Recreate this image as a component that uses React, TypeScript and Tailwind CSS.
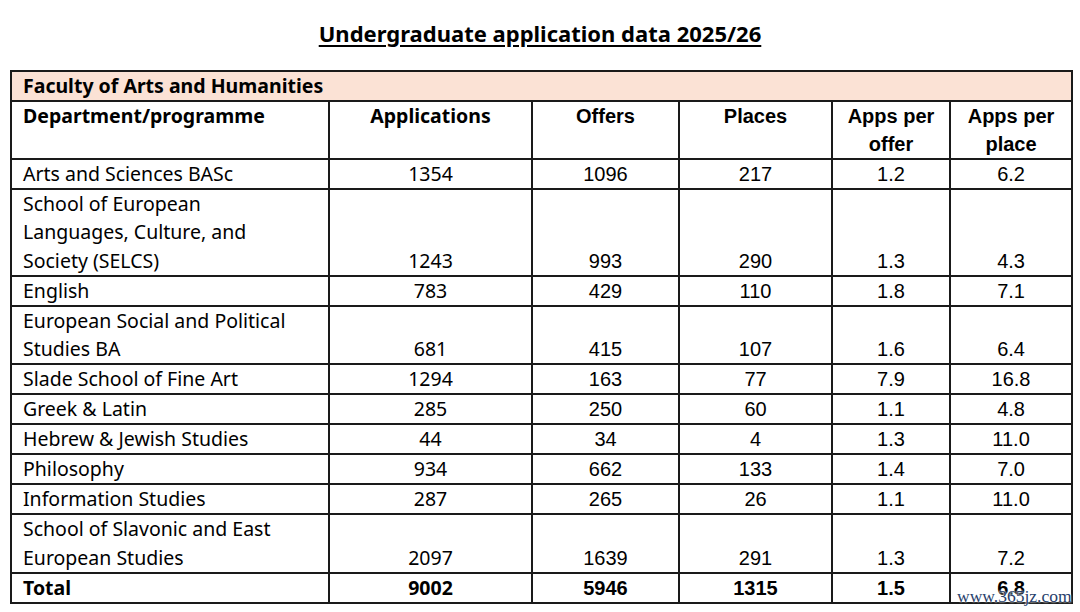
import React from "react";

type Row = { name: string[]; v: string[]; bold?: boolean };

const rows: Row[] = [
  { name: ["Arts and Sciences BASc"], v: ["1354", "1096", "217", "1.2", "6.2"] },
  {
    name: ["School of European", "Languages, Culture, and", "Society (SELCS)"],
    v: ["1243", "993", "290", "1.3", "4.3"],
  },
  { name: ["English"], v: ["783", "429", "110", "1.8", "7.1"] },
  {
    name: ["European Social and Political", "Studies BA"],
    v: ["681", "415", "107", "1.6", "6.4"],
  },
  { name: ["Slade School of Fine Art"], v: ["1294", "163", "77", "7.9", "16.8"] },
  { name: ["Greek & Latin"], v: ["285", "250", "60", "1.1", "4.8"] },
  { name: ["Hebrew & Jewish Studies"], v: ["44", "34", "4", "1.3", "11.0"] },
  { name: ["Philosophy"], v: ["934", "662", "133", "1.4", "7.0"] },
  { name: ["Information Studies"], v: ["287", "265", "26", "1.1", "11.0"] },
  {
    name: ["School of Slavonic and East", "European Studies"],
    v: ["2097", "1639", "291", "1.3", "7.2"],
  },
  { name: ["Total"], v: ["9002", "5946", "1315", "1.5", "6.8"], bold: true },
];

const cell = "border-2 border-[#1a1a1a] p-0 leading-[28.1px]";

export default function App() {
  return (
    <div className="relative w-[1080px] h-[612px] bg-white text-black overflow-hidden">
      <div className="pt-[18px] h-[48px] text-center leading-[30px] font-['Noto_Sans',sans-serif] text-[22px] font-bold underline decoration-[1.5px] underline-offset-[3px]">
        Undergraduate application data 2025/26
      </div>
      <table className="mt-[22px] ml-[10px] w-[1061px] table-fixed border-collapse">
        <colgroup>
          <col className="w-[318px]" />
          <col className="w-[203px]" />
          <col className="w-[147px]" />
          <col className="w-[153px]" />
          <col className="w-[118px]" />
          <col className="w-[122px]" />
        </colgroup>
        <tbody>
          <tr>
            <td
              colSpan={6}
              className={`${cell} bg-[#fbe2d5] pl-[11px] font-['Noto_Sans',sans-serif] text-[19.5px] font-bold`}
            >
              Faculty of Arts and Humanities
            </td>
          </tr>
          <tr className="align-top">
            <td className={`${cell} pl-[11px] font-['Noto_Sans',sans-serif] text-[19.5px] font-bold`}>
              Department/programme
              <br />
              &nbsp;
            </td>
            <td className={`${cell} text-center font-['Noto_Sans',sans-serif] text-[19.5px] font-bold`}>
              Applications
            </td>
            <td className={`${cell} text-center font-['Liberation_Sans',sans-serif] text-[20px] font-bold`}>
              Offers
            </td>
            <td className={`${cell} text-center font-['Liberation_Sans',sans-serif] text-[20px] font-bold`}>
              Places
            </td>
            <td className={`${cell} text-center font-['Liberation_Sans',sans-serif] text-[20px] font-bold`}>
              Apps per
              <br />
              offer
            </td>
            <td className={`${cell} text-center font-['Liberation_Sans',sans-serif] text-[20px] font-bold`}>
              Apps per
              <br />
              place
            </td>
          </tr>
          {rows.map((r, i) => (
            <tr key={i} className="align-bottom">
              <td
                className={`${cell} pl-[11px] whitespace-nowrap font-['Noto_Sans',sans-serif] text-[19.5px] ${
                  r.bold ? "font-bold" : ""
                }`}
              >
                {r.name.map((n, j) => (
                  <div key={j}>{n}</div>
                ))}
              </td>
              <td
                className={`${cell} text-center font-['Noto_Sans',sans-serif] text-[19.5px] ${
                  r.bold ? "font-bold" : ""
                }`}
              >
                {r.v[0]}
              </td>
              {r.v.slice(1).map((v, j) => (
                <td
                  key={j}
                  className={`${cell} text-center font-['Liberation_Sans',sans-serif] text-[20px] ${
                    r.bold ? "font-bold" : ""
                  }`}
                >
                  {v}
                </td>
              ))}
            </tr>
          ))}
        </tbody>
      </table>
      <div className="absolute left-[957px] top-[586px] font-['Liberation_Serif',serif] text-[17.5px] leading-[20px] text-[#27406b] [text-shadow:0_0_2px_#ffffff,0_0_2px_#ffffff]">
        www.365jz.com
      </div>
    </div>
  );
}
